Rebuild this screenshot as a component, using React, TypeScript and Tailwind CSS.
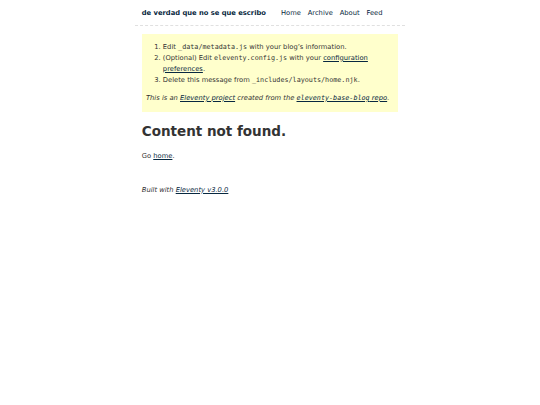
import React from "react";

const link = "text-[#082840] underline";
const code = "font-['DejaVu_Sans_Mono',monospace] text-[1em] break-all";

export default function App() {
  return (
    <div className="min-h-screen bg-white">
      <div className="mx-auto w-[270px] text-[6.75px] leading-[1.65] text-[#333] font-['DejaVu_Sans',sans-serif]">
        <header className="flex flex-wrap items-center justify-start gap-[15px] pt-[7.5px] pb-[6.75px] px-[1em] border-b border-dashed border-[#e0e0e0]">
          <a href="#" className="font-bold text-[#082840] no-underline">
            de verdad que no se que escribo
          </a>
          <nav>
            <ul className="flex gap-x-[1em] gap-y-[0.5em] list-none m-0 p-0">
              <li className="inline-block"><a href="#" className="text-[#082840] no-underline">Home</a></li>
              <li className="inline-block"><a href="#" className="text-[#082840] no-underline">Archive</a></li>
              <li className="inline-block"><a href="#" className="text-[#082840] no-underline">About</a></li>
              <li className="inline-block"><a href="#" className="text-[#082840] no-underline">Feed</a></li>
            </ul>
          </nav>
        </header>
        <main className="pt-[7.75px] pb-[1em] px-[1em]">
          <div className="block bg-[#ffffcc] text-[#333] pt-[7.5px] pb-[8px] px-[0.625em]">
            <ol className="list-decimal pl-[16.875px] mt-0 mb-[1em]">
              <li>
                Edit <code className={code}>_data/metadata.js</code> with your blog’s information.
              </li>
              <li>
                (Optional) Edit <code className={code}>eleventy.config.js</code> with your{" "}
                <a href="#" className={link}>configuration preferences</a>.
              </li>
              <li>
                Delete this message from <code className={code}>_includes/layouts/home.njk</code>.
              </li>
            </ol>
            <p className="m-0">
              <em>
                This is an <a href="#" className={link}>Eleventy project</a> created from the{" "}
                <a href="#" className={link}><code className={code}>eleventy-base-blog</code> repo</a>.
              </em>
            </p>
          </div>
          <h1 className="text-[2em] font-bold leading-[1.65] mt-[8px] mb-[9px]">Content not found.</h1>
          <p className="my-[1em]">
            Go <a href="#" className={link}>home</a>.
          </p>
        </main>
        <footer className="pt-[2px] pb-[1em] px-[1em]">
          <p className="my-[1em]">
            <em>
              Built with <a href="#" className={link}>Eleventy v3.0.0</a>
            </em>
          </p>
        </footer>
      </div>
    </div>
  );
}
